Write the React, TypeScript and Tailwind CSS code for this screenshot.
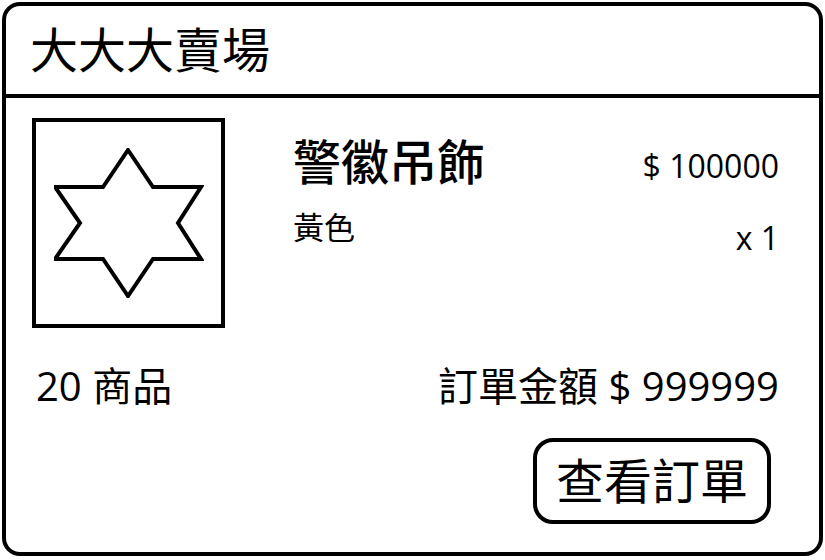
import React from "react";

const StarIcon = () => (
  <svg width="150" height="150" viewBox="0 0 150 150" fill="none">
    <polygon
      points="74,2 99,39 147,39 124,75 147,111 99,111 74,148 49,111 1,111 26,75 1,39 49,39"
      stroke="black"
      strokeWidth="4"
      strokeLinejoin="miter"
      fill="white"
    />
  </svg>
);

const App = () => {
  return (
    <div className="w-[825px] h-[560px] bg-white p-[2px] font-['Open_Sans','Noto_Sans_CJK_TC',sans-serif] text-black">
      <div className="w-[821px] h-[554px] border-4 border-black rounded-[18px] flex flex-col">
        {/* Header */}
        <div className="h-[92px] border-b-4 border-black flex items-center px-[24px]">
          <h1 className="text-[48px] leading-none font-normal">大大大賣場</h1>
        </div>

        {/* Order body */}
        <div className="flex-1 flex flex-col px-[26px] pt-[20px]">
          <div className="flex">
            <div className="w-[193px] h-[210px] border-4 border-black flex items-center justify-center">
              <StarIcon />
            </div>
            <div className="flex-1 flex justify-between pl-[68px] pr-[14px] pt-[20px]">
              <div className="flex flex-col">
                <span className="text-[48px] leading-none font-medium">警徽吊飾</span>
                <span className="text-[31px] leading-none mt-[26px]">黃色</span>
              </div>
              <div className="flex flex-col items-end">
                <span className="text-[32px] leading-none mt-[12px]">$ 100000</span>
                <span className="text-[32px] leading-none mt-[40px]">x 1</span>
              </div>
            </div>
          </div>

          <div className="flex justify-between items-center mt-[38px] pr-[14px] pl-[4px]">
            <span className="text-[40px] leading-none">20 商品</span>
            <span className="text-[40px] leading-none">訂單金額 $ 999999</span>
          </div>

          <div className="flex justify-end mt-[32px] pr-[22px]">
            <button className="w-[238px] h-[86px] border-4 border-black rounded-[20px] flex items-center justify-center text-[48px] leading-none">
              查看訂單
            </button>
          </div>
        </div>
      </div>
    </div>
  );
};

export default App;
